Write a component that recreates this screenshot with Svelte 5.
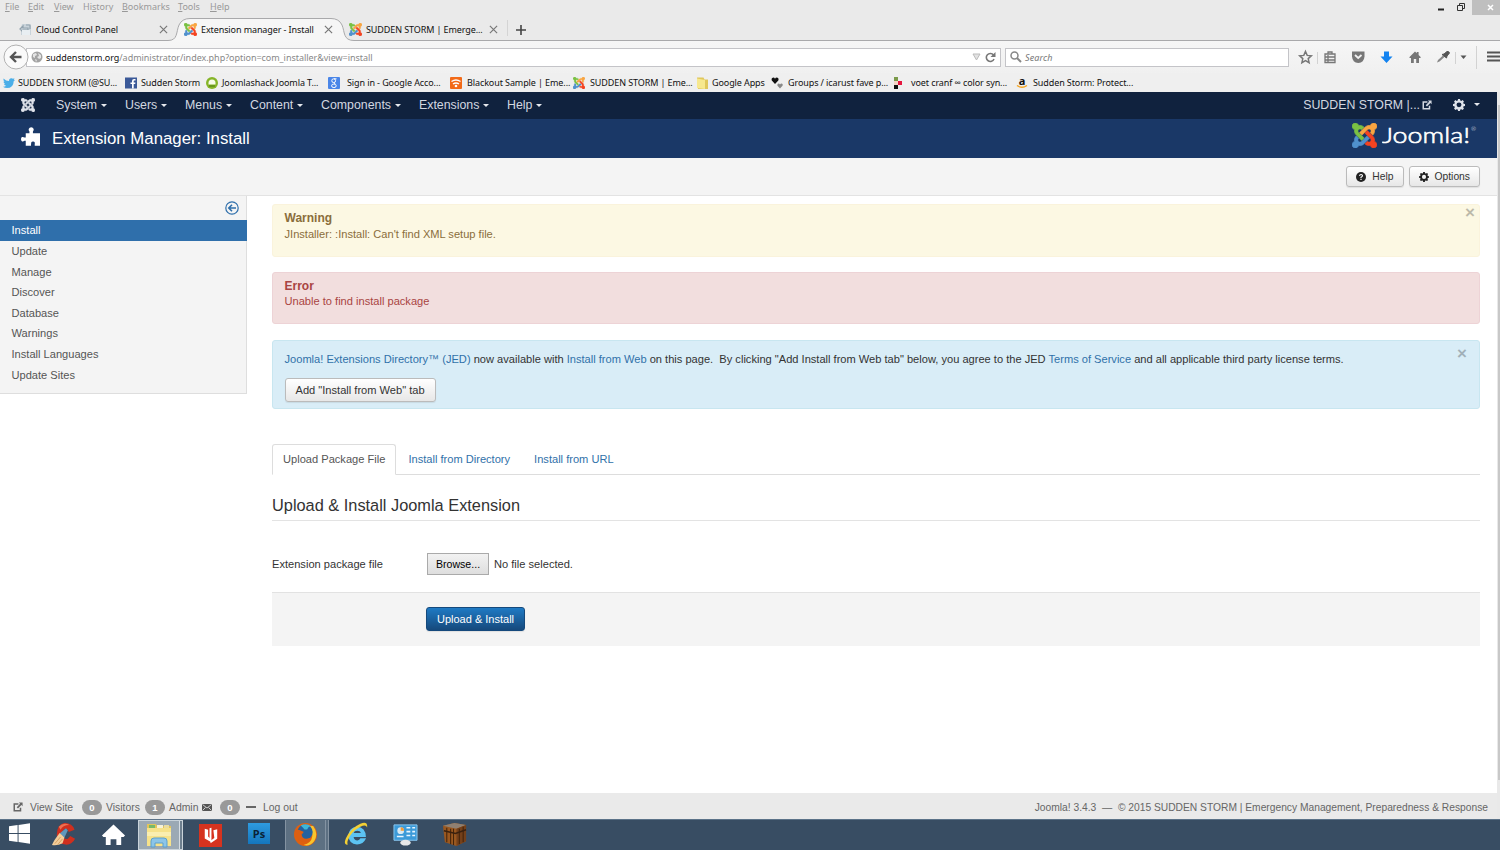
<script>
  let activeItem = "Install";
  let activePane = "Upload Package File";

  const browserMenu = ["File", "Edit", "View", "History", "Bookmarks", "Tools", "Help"];

  const bookmarks = [
    { icon: "twitter", label: "SUDDEN STORM (@SU..." },
    { icon: "facebook", label: "Sudden Storm" },
    { icon: "shack", label: "Joomlashack Joomla T..." },
    { icon: "google", label: "Sign in - Google Acco..." },
    { icon: "blackout", label: "Blackout Sample | Eme..." },
    { icon: "joomla", label: "SUDDEN STORM | Eme..." },
    { icon: "folder", label: "Google Apps" },
    { icon: "hearts", label: "Groups / icarust fave p..." },
    { icon: "squares", label: "voet cranf ∞ color syn..." },
    { icon: "amazon", label: "Sudden Storm: Protect..." },
  ];

  const adminMenu = ["System", "Users", "Menus", "Content", "Components", "Extensions", "Help"];

  const sidebar = [
    "Install",
    "Update",
    "Manage",
    "Discover",
    "Database",
    "Warnings",
    "Install Languages",
    "Update Sites",
  ];

  const panes = ["Upload Package File", "Install from Directory", "Install from URL"];

  // One arm of the Joomla mark, turned a quarter each time
  const arm =
    "M16.719 14.759L14.22 17.26l-2.37 2.37-.462.466c-1.368 1.365-3.297 1.83-5.047 1.397-.327 1.424-1.604 2.49-3.13 2.49C1.44 23.983 0 22.547 0 20.772c0-1.518 1.055-2.789 2.469-3.123-.446-1.76.016-3.705 1.396-5.08l.179-.18 2.37 2.37-.184.181c-.769.779-.769 2.024 0 2.789.771.78 2.022.78 2.787 0l.465-.465 2.367-2.371 2.502-2.506z";
  const armColors = ["#5091cd", "#7ac143", "#f9a541", "#f44321"];

  const gear =
    "M6.6 0h2.8l.4 2 1.5.7 1.8-1.2 1.9 2-1.1 1.7.6 1.5 2 .4v2.8l-2 .4-.6 1.5 1.1 1.8-1.9 1.9-1.8-1.1-1.5.6-.4 2H6.6l-.4-2-1.5-.6-1.8 1.1L1 13.600l1.100-1.800-.6-1.500-2-.4V7.100l2-.4.6-1.500L1 3.500l1.900-2 1.800 1.200L6.200 2zM8 4.800a3.500 3.500 0 1 0 0 7A3.500 3.500 0 0 0 8 4.800z";
</script>

{#snippet joomlaMark(mono)}
  <svg class="mark" viewBox="0 0 24 24">
    {#each armColors as color, i}
      <path
        d={arm}
        fill={mono ? "#dfe3ea" : color}
        stroke={mono ? "#dfe3ea" : color}
        stroke-width="0.6"
        transform="rotate({i * 90} 12 12)"
      />
    {/each}
  </svg>
{/snippet}

{#snippet cross()}
  <svg class="cross" viewBox="0 0 10 10"><path d="M1 1l8 8M9 1l-8 8" /></svg>
{/snippet}

{#snippet external()}
  <svg class="external" viewBox="0 0 12 12">
    <path d="M6.5 2.5H1.5v8h7.500V7" fill="none" stroke="currentColor" stroke-width="1.8" />
    <path d="M7 .5h4.500V5L10 3.600 6 7.700 4.500 6.200l4-4z" fill="currentColor" />
  </svg>
{/snippet}

<div class="screen">
  <div class="browser">
    <div class="titlebar">
      <nav class="browser-menu">
        {#each browserMenu as item}
          {@const key = item === "History" ? 2 : 0}
          <span>{item.slice(0, key)}<u>{item[key]}</u>{item.slice(key + 1)}</span>
        {/each}
      </nav>
      <div class="window-buttons">
        <svg viewBox="0 0 65 15" width="65" height="15">
          <rect x="37" y="0" width="28" height="15" fill="#bfbfbf" />
          <path d="M3 9.500h6" stroke="#222" stroke-width="2" />
          <path d="M22.500 5.500h5v5h-5zM24.500 5V3.500h5v5H28" fill="none" stroke="#333" />
          <path d="M53 5l5 5M58 5l-5 5" stroke="#fff" stroke-width="1.500" />
        </svg>
      </div>
    </div>

    <div class="tabs">
      <svg class="tab-shape" viewBox="0 0 1500 27" width="1500" height="27">
        <path
          d="M0 25.500H168C178 25.500 176 17 179 10Q182 3.500 190 3.500H331Q339 3.500 342 10C345 17 343 25.500 354 25.500H1500V27H0z"
          fill="#f6f6f6"
          stroke="#a9a9ab"
        />
        <path d="M0 26.500H1500" stroke="#f6f6f6" />
        <path d="M507.500 5v16" stroke="#d4d4d4" />
      </svg>
      <div class="tab first">
        <svg class="fav" viewBox="0 0 13 13">
          <path d="M3 1h7l2 2v9H2V5z" fill="#c9d3da" />
          <path d="M1 6l3-3v2h5v2H4v2zM7 2h4v4" fill="none" stroke="#93a3ae" stroke-width="1.200" />
          <path d="M3 7h8v5H3z" fill="#e8eef2" />
        </svg>
        <span class="tab-title">Cloud Control Panel</span>
        {@render cross()}
      </div>
      <div class="tab second">
        {@render joomlaMark(false)}
        <span class="tab-title">Extension manager - Install</span>
        {@render cross()}
      </div>
      <div class="tab third">
        {@render joomlaMark(false)}
        <span class="tab-title">SUDDEN STORM | Emerge...</span>
        {@render cross()}
      </div>
      <svg class="plus" viewBox="0 0 10 10"><path d="M5 0v10M0 5h10" stroke="#444" stroke-width="1.600" /></svg>
    </div>

    <div class="toolbar">
      <svg class="back" viewBox="0 0 26 26">
        <circle cx="13" cy="13" r="12" fill="#fafafa" stroke="#b1b1b1" />
        <path d="M18.500 13H8.500M13 8l-5 5 5 5" fill="none" stroke="#555" stroke-width="2.400" />
      </svg>
      <div class="url">
        <svg class="globe" viewBox="0 0 12 12">
          <circle cx="6" cy="6" r="5.500" fill="#a3a3a3" />
          <path d="M2 3l3-1 1 2-2 1v2L2 6zM7 2l3 2v3L8 8 6 6l2-1zM4 8l2 1-1 2z" fill="#e4e4e4" />
        </svg>
        <span class="address"
          ><b>suddenstorm.org</b>/administrator/index.php?option=com_installer&amp;view=install</span
        >
        <svg class="url-tools" viewBox="0 0 24 12">
          <path d="M1 3h7l-3.500 6z" fill="#e2e2e2" stroke="#bbb" />
          <path d="M21.500 4A4 4 0 1 0 22 8" fill="none" stroke="#777" stroke-width="1.600" />
          <path d="M23.500 1v5h-5z" fill="#777" />
        </svg>
      </div>
      <div class="search">
        <svg viewBox="0 0 12 12">
          <circle cx="4.500" cy="4.500" r="3.500" fill="none" stroke="#888" stroke-width="1.500" />
          <path d="M7 7l4 4" stroke="#888" stroke-width="2" />
        </svg>
        <span>Search</span>
      </div>
      <svg class="tool-icons" viewBox="0 0 211 30">
        <path
          d="M16.500 9.500l1.700 3.900 4.100.400-3.100 2.800.900 4.100-3.600-2.100-3.600 2.100.900-4.100-3.100-2.800 4.100-.400z"
          fill="none"
          stroke="#777"
          stroke-width="1.500"
        />
        <path d="M28.500 10v12M166.500 10v12M187.500 4v23" stroke="#d2d2d2" />
        <path
          d="M36 12h10v8.500H36zM39 12v-2h4v2M36 15h10M36 18h10M39 13v7"
          fill="none"
          stroke="#777"
          stroke-width="1.300"
        />
        <path d="M63 9.500h12.500v5q-.500 6-6.200 6.500-5.800-.500-6.300-6.500z" fill="#777" />
        <path d="M66 13l3.200 3 3.300-3" fill="none" stroke="#f2f2f2" stroke-width="1.800" />
        <path d="M95 9.500h5v5h3.500l-6 6.500-6-6.500H95z" fill="#1383f0" />
        <path d="M120.500 15l5.500-5.500 1.800 1.800V10h1.800v3l2 2v1h-1.600v5h-2.800v-4h-2.400v4H122v-5h-1.500z" fill="#777" />
        <path d="M148 20.500l1-2.500 5-4.500 1.500 1.500-5 4.500z" fill="#888" />
        <path d="M153 12.500l2-.500 3-2.500q2-.500 2.500 1.500l-2.500 3-.500 2z" fill="#555" stroke="#555" />
        <path d="M171.500 13.500h6l-3 3.500z" fill="#555" />
        <path d="M198 10.500h13M198 14.500h13M198 18.500h13" stroke="#555" stroke-width="2" />
      </svg>
    </div>

    <div class="bookmarks">
      {#each bookmarks as mark}
        <span class="bookmark-icon">
          {#if mark.icon === "joomla"}
            {@render joomlaMark(false)}
          {:else if mark.icon === "twitter"}
            <svg viewBox="0 0 12 12"><path d="M.500 1.500Q3 4 6 4 6 1 8.600 1.200l1.400.600 1.500-.500-.700 1.400L12 3l-1.300 1.200Q10.500 11 4 11 1.500 11 0 9.800q2 0 3.200-1Q1.500 8.500 1 7h1.200Q.500 6.200.500 4.400l1 .300Q0 3.500.500 1.500z" fill="#4aaee8" /></svg>
          {:else if mark.icon === "facebook"}
            <svg viewBox="0 0 12 12"><rect y=".500" width="12" height="11" fill="#3b5998" /><path d="M7 11.500V7H5.500V5.500H7V4q0-2 2-2h1.500v1.600H9.300q-.600 0-.600.700v1.200h1.700L10.200 7H8.700v4.500z" fill="#fff" /></svg>
          {:else if mark.icon === "shack"}
            <svg viewBox="0 0 12 12"><circle cx="6" cy="6" r="6" fill="#86b528" /><path d="M2.500 6a3.500 3.500 0 0 1 7 0v1.500h-7z" fill="#f6fbe8" /><path d="M3 9h6" stroke="#4c7a11" /></svg>
          {:else if mark.icon === "google"}
            <svg viewBox="0 0 12 12"><rect width="12" height="12" rx="1" fill="#4a86e8" /><circle cx="5.700" cy="3.700" r="1.900" fill="none" stroke="#fff" /><ellipse cx="5.900" cy="8.800" rx="2.300" ry="1.800" fill="none" stroke="#fff" /><path d="M6 1.800h2.500M6 5.500l1 1.500" stroke="#fff" /></svg>
          {:else if mark.icon === "blackout"}
            <svg viewBox="0 0 12 12"><rect width="12" height="12" rx="1" fill="#f26a18" /><path d="M1.500 4.500Q6 1.500 10.500 4.500M3 7q3-2 6 0" fill="none" stroke="#fff" stroke-width="1.500" /><circle cx="6" cy="9" r="1.300" fill="#fff" /></svg>
          {:else if mark.icon === "folder"}
            <svg viewBox="0 0 12 12"><path d="M0 .500h6.500l1 2H11V12H1z" fill="#e0c75c" /><path d="M0 1.500L8 3v9L0 11z" fill="#f7e88e" /></svg>
          {:else if mark.icon === "hearts"}
            <svg viewBox="0 0 12 12"><path d="M4 7L.800 3.500Q0 1 2.200.500 3.500.500 4 1.700 4.500.500 6 .500 8.200 1 7.300 3.500z" fill="#111" /><path d="M9 11.500L6.500 8.800Q6 7 7.500 6.500q1 0 1.500 1 .500-1 1.700-1Q12.300 7 11.500 8.800z" fill="#888" /></svg>
          {:else if mark.icon === "squares"}
            <svg viewBox="0 0 12 12"><path d="M1 0h4v4H1z" fill="#7b9a4a" /><path d="M5 4h4v4H5z" fill="#e5173f" /><path d="M1 4h4v4H1z" fill="#f5d6c8" /><path d="M1 8h4v4H1z" fill="#111" /></svg>
          {:else}
            <span class="amazon">a<svg viewBox="0 0 12 4"><path d="M1 .500q5 3.500 10 0" fill="none" stroke="#f5a623" stroke-width="1.400" /></svg></span>
          {/if}
        </span>
        <span class="bookmark-label">{mark.label}</span>
      {/each}
    </div>
  </div>

  <div class="page">
    <div class="content">
      <header class="navbar">
        <div class="brand">{@render joomlaMark(true)}</div>
        <nav class="admin-menu">
          {#each adminMenu as item}
            <span class="menu-item">{item}<i class="caret"></i></span>
          {/each}
        </nav>
        <div class="site-name">SUDDEN STORM |... {@render external()}</div>
        <div class="settings">
          <svg viewBox="-0.5 0 17 17"><path d={gear} fill="#dfe3ea" fill-rule="evenodd" /></svg>
          <i class="caret"></i>
        </div>
      </header>

      <div class="header">
        <svg class="puzzle" viewBox="0 0 18 18">
          <path d="M4.500 6H8V4.300Q7 3.300 7.300 2 8 .300 9.700.300T12 2q.300 1.300-.700 2.300V6H18v11.800h-5V16q.600-2-1.500-2.200T9.500 16v1.800h-5V13H3.300Q2.300 14 1 13.700 0 13 0 11.500T1 9.500q1.300-.300 2.300.500h1.200z" fill="#fff" />
        </svg>
        <h1>Extension Manager: Install</h1>
        <div class="logo">
          {@render joomlaMark(false)}
          <svg class="wordmark" viewBox="0 0 96 28">
            <text x="0" y="21.500" textLength="88" lengthAdjust="spacingAndGlyphs">Joomla!</text>
            <text class="reg" x="89" y="10">®</text>
          </svg>
        </div>
      </div>

      <div class="subhead">
        <button class="btn small">
          <svg viewBox="0 0 12 12"><circle cx="6" cy="6" r="6" fill="#222" /><path d="M4.200 4.700Q4.500 3 6.100 3T7.800 4.600Q7.800 5.500 6 6.400v.800M6 8.200v1.500" fill="none" stroke="#fff" stroke-width="1.400" /></svg>
          Help
        </button>
        <button class="btn small">
          <svg viewBox="-0.5 0 17 17"><path d={gear} fill="#222" fill-rule="evenodd" /></svg>
          Options
        </button>
      </div>

      <div class="columns">
        <aside>
          <div class="toggle">
            <svg viewBox="0 0 14 14">
              <circle cx="7" cy="7" r="6.200" fill="none" stroke="#2f6fab" stroke-width="1.200" />
              <path d="M11 7H4M7 3.800L3.800 7 7 10.200" fill="none" stroke="#2f6fab" stroke-width="1.600" />
            </svg>
          </div>
          {#each sidebar as item}
            <div class="side-item" class:active={item === activeItem}>{item}</div>
          {/each}
        </aside>

        <main>
          <div class="alert warning">
            <div><h4>Warning</h4><p>JInstaller: :Install: Can't find XML setup file.</p></div>
            <span class="close">×</span>
          </div>
          <div class="alert error">
            <div><h4>Error</h4><p>Unable to find install package</p></div>
          </div>
          <div class="alert info">
            <div>
              <p class="jed">
                <a href="#jed">Joomla! Extensions Directory™ (JED)</a> now available with
                <a href="#web">Install from Web</a> on this page.&nbsp; By clicking "Add Install from Web tab" below,
                you agree to the JED <a href="#terms">Terms of Service</a> and all applicable third party license terms.
              </p>
              <button class="btn">Add "Install from Web" tab</button>
            </div>
            <span class="close">×</span>
          </div>

          <div class="panes">
            {#each panes as pane}
              <span class="pane" class:active={pane === activePane}>{pane}</span>
            {/each}
          </div>

          <h2>Upload &amp; Install Joomla Extension</h2>
          <div class="field">
            <span class="field-label">Extension package file</span>
            <button class="browse">Browse...</button>
            <span>No file selected.</span>
          </div>
          <div class="actions">
            <button class="btn primary">Upload &amp; Install</button>
          </div>
        </main>
      </div>

      <footer>
        <div class="status">
          {@render external()}
          <span class="view-site">View Site</span>
          <span class="badge">0</span>
          <span class="visitors">Visitors</span>
          <span class="badge">1</span>
          <span class="admin">Admin</span>
          <svg class="mail" viewBox="0 0 10 7"><path d="M0 0h10v7H0z" fill="#555" /><path d="M.500.500L5 4 9.500.500M.500 6.500L3.500 3.500M9.500 6.500l-3-3" fill="none" stroke="#e8e8e8" stroke-width=".800" /></svg>
          <span class="badge">0</span>
          <i class="dash"></i>
          <span>Log out</span>
        </div>
        <div class="copyright">
          Joomla! 3.4.3 &nbsp;—&nbsp; © 2015 SUDDEN STORM | Emergency Management, Preparedness &amp; Response
        </div>
      </footer>
    </div>
    <div class="scrollbar"><i></i></div>
  </div>

  <div class="taskbar">
    <span class="task">
      <svg class="start" viewBox="0 0 22 22"><path d="M0 3.500l9-1.300v8.300H0zM10 2l12-1.700v10.200H10zM0 11.500h9v8.300l-9-1.300zM10 11.500h12v10.200L10 20z" fill="#fff" /></svg>
    </span>
    <span class="task">
      <svg class="big" viewBox="0 0 26 26">
        <path d="M24.500 8l-6 2.500q-1-4-4-3.500-4 2-3 7 2 4.500 6 3.500l2.500-3 5 3q-3 6.500-10 6-9-1-9-10Q6 3 13.500 1 22 .500 24.500 8z" fill="#cf2f1e" />
        <path d="M8 5q5-5 11-2-7 0-9 5z" fill="#ee7050" />
        <path d="M15.500 6.500l2 2L14 16l-5-4z" fill="#5f97bd" />
        <path d="M9 11.500l5 4.500-2 6q-5 3-11 2 2-5 8-12.500z" fill="#f3cd9a" />
        <path d="M4 22.500l6-7M7 23.500l5-6" stroke="#c98d48" stroke-width=".700" />
      </svg>
    </span>
    <span class="task">
      <svg class="big" viewBox="0 0 26 26"><path d="M13 2.500L25 14l-1.500 1.500H21V24h-5v-6h-6v6H5v-8.500H2.500L1 14z" fill="#fff" /></svg>
    </span>
    <span class="task open current">
      <svg class="wide" viewBox="0 0 28 26">
        <path d="M2 2h9l1 2h14v18H2z" fill="#e3c45a" />
        <path d="M4 3h6v3H4z" fill="#78b96a" /><path d="M12 3h6v4h-6z" fill="#f6f2d8" /><path d="M19 3h5v4h-5z" fill="#e9dca0" />
        <path d="M2 6h24v18H2z" fill="#f6e28a" />
        <path d="M2 10h24v4H2z" fill="#faeeb0" />
        <path d="M6 25v-6q0-3 3-3h10q3 0 3 3v6h-4v-4h-8v4z" fill="#8cc5e8" stroke="#5b9fce" />
      </svg>
    </span>
    <span class="task">
      <svg viewBox="0 0 24 24"><path d="M0 0h24v24H0z" fill="#d6331f" /><path d="M6 5l3.500 1v7l1.500 1.500V4.500L13 4v15l-7-4z" fill="#fff" /><path d="M15 6.500l4-1v10L12 20v-2.500l4-3z" fill="#fff" /></svg>
    </span>
    <span class="task">
      <span class="ps">Ps</span>
    </span>
    <span class="task open">
      <svg class="firefox" viewBox="0 0 24 24">
        <circle cx="12" cy="12" r="12" fill="#e0600f" />
        <path d="M20 3q6 8 1 16-5 6-11 4 8-2 9-9 .500-7-3-11z" fill="#f9c52d" />
        <circle cx="11.500" cy="9.500" r="8" fill="#24629f" />
        <path d="M7 2.500q6-3 11 1-3 0-4 3-4 1-4-1z" fill="#3fb6d8" />
        <path d="M1 6q2 2 4 1l5 2q0 2-2 2.500 0 5 5 5l5-1q-3 6-10 4-8-3-7-13.500z" fill="#dc5f12" />
      </svg>
    </span>
    <span class="task">
      <svg class="big" viewBox="0 0 26 26">
        <path d="M23 17q-3 6.500-9.500 6.500-8.500-1-9-9Q5 5.500 13.500 5 22.500 5.500 22.800 15.500H10q.500 3.500 4 3.700 2.200 0 3-2.200zM10 11.500h7.500Q17 9 13.800 9 10.600 9 10 11.500z" fill="#5cc3f2" />
        <path d="M4 23.500q-5 1-2-6.500Q7 6 17 1.700q8-3 7 4-1-3.500-7-.700Q7 10.500 4 19q-1 3 0 4.500z" fill="#f4d034" />
      </svg>
    </span>
    <span class="task">
      <svg class="big" viewBox="0 0 26 24">
        <path d="M1 2h24v16H1z" fill="#3c9ad8" stroke="#8ac7ee" />
        <circle cx="8" cy="8" r="3.500" fill="#d6e9f5" /><path d="M8 8V4.500A3.500 3.500 0 0 1 11.500 8z" fill="#f09a36" />
        <path d="M14 5h4M20 5h3M14 9h4M20 9h3M14 13h4M20 13h3M4 14h7" stroke="#e7f5ff" stroke-width="1.600" />
        <ellipse cx="13" cy="20.500" rx="5.500" ry="3" fill="#e8e8e8" />
      </svg>
    </span>
    <span class="task">
      <svg class="big" viewBox="0 0 26 26">
        <path d="M1 4l12-3 12 2v17l-10 5L3 21z" fill="#9a5820" />
        <path d="M1 4l12-3 12 2-10 4z" fill="#8f8072" />
        <path d="M15 7l10-4v17l-10 5z" fill="#74401a" />
        <path d="M5 6v15M9 7v16M12 7v17M18 7v16M22 5v16" stroke="#3d2008" />
        <path d="M2 9l12 3 11-4" fill="none" stroke="#3a210f" stroke-width="1.600" />
      </svg>
    </span>
  </div>
</div>

<style>
  :global(body) {
    margin: 0;
    overflow: hidden;
  }

  .screen {
    width: 1500px;
    height: 850px;
    display: flex;
    flex-direction: column;
    overflow: hidden;
    background: #fff;
    font-family: "Liberation Sans", Arial, sans-serif;
    font-size: 11.1px;
    color: #333;
    white-space: nowrap;
  }

  svg {
    display: block;
    flex: none;
  }

  button {
    font: inherit;
    margin: 0;
  }

  /* browser chrome */
  .browser {
    height: 92px;
    background: #eaeaea;
    color: #111;
    font-family: "Noto Sans", "Open Sans", sans-serif;
    font-size: 9px;
    letter-spacing: -0.1px;
  }

  .titlebar {
    height: 15px;
    display: flex;
    justify-content: space-between;
  }

  .browser-menu {
    display: grid;
    grid-template-columns: 23px 26px 29px 39px 56px 32px 30px;
    padding-left: 5px;
    line-height: 14px;
    color: #999;
    letter-spacing: 0;
  }

  .tabs {
    position: relative;
    height: 26px;
    display: flex;
    align-items: center;
  }

  .tab-shape {
    position: absolute;
    left: 0;
    top: 0;
  }

  .tab {
    position: relative;
    display: flex;
    align-items: center;
    height: 26px;
    padding-top: 3px;
    box-sizing: border-box;
  }

  .first {
    margin-left: 19px;
    width: 149px;
  }

  .second {
    margin-left: 16px;
    width: 149px;
  }

  .third {
    margin-left: 16px;
    width: 149px;
  }

  .tab-title {
    flex: 1;
    margin-left: 4px;
  }

  .fav,
  .tab .mark {
    width: 13px;
    height: 13px;
  }

  .cross {
    width: 9px;
    height: 9px;
    fill: none;
    stroke: #777;
    stroke-width: 1.3;
  }

  .plus {
    position: relative;
    width: 10px;
    height: 10px;
    margin: 3px 0 0 18px;
  }

  .toolbar {
    height: 32px;
    display: flex;
    align-items: center;
    background: linear-gradient(#f6f6f6, #f0f0f0);
  }

  .back {
    width: 26px;
    height: 26px;
    margin-left: 3px;
    z-index: 1;
  }

  .url {
    width: 975px;
    height: 19px;
    margin-left: -3px;
    box-sizing: border-box;
    border: 1px solid #c4c4c8;
    background: #fff;
    display: flex;
    align-items: center;
    padding-left: 4px;
  }

  .globe {
    width: 12px;
    height: 12px;
  }

  .address {
    flex: 1;
    margin-left: 3px;
    color: #888;
    letter-spacing: -0.03px;
  }

  .address b {
    font-weight: 400;
    color: #111;
  }

  .url-tools {
    width: 24px;
    height: 12px;
    margin-right: 4px;
  }

  .search {
    width: 284px;
    height: 19px;
    margin-left: 4px;
    box-sizing: border-box;
    border: 1px solid #c4c4c8;
    background: #fff;
    display: flex;
    align-items: center;
    padding-left: 4px;
    gap: 3px;
    font-style: italic;
    color: #777;
  }

  .search svg {
    width: 12px;
    height: 12px;
  }

  .search span {
    letter-spacing: 0.1px;
  }

  .tool-icons {
    width: 211px;
    height: 30px;
  }

  .bookmarks {
    height: 19px;
    display: grid;
    grid-template-columns:
      15px 107px 16px 65px 16px 106px 19px 103px 17px 106px
      17px 107px 15px 59px 17px 105px 18px 105px 17px 104px;
    align-items: center;
    padding-left: 3px;
    background: #efefef;
    line-height: 18px;
  }

  .bookmark-icon svg,
  .bookmark-icon .mark {
    width: 12px;
    height: 12px;
  }

  .amazon {
    display: block;
    width: 12px;
    font-size: 11px;
    font-weight: bold;
    line-height: 9px;
    text-align: center;
  }

  .bookmark-icon .amazon svg {
    height: 4px;
  }

  /* administrator page */
  .page {
    height: 727px;
    display: flex;
  }

  .content {
    width: 1497px;
    display: flex;
    flex-direction: column;
  }

  .scrollbar {
    width: 3px;
    background: #e9e9e9;
  }

  .scrollbar i {
    display: block;
    height: 675px;
    margin: 13px 0 0 1px;
    background: #c8c8c8;
  }

  .navbar {
    height: 27px;
    display: flex;
    align-items: center;
    padding-bottom: 2px;
    box-sizing: border-box;
    background: #10223e;
    color: #d3d8e0;
    font-size: 12.35px;
  }

  .brand {
    width: 56px;
  }

  .brand .mark {
    width: 14px;
    height: 14px;
    margin-left: 21px;
  }

  .admin-menu {
    display: grid;
    grid-template-columns: 69px 60px 65px 71px 98px 88px 60px;
    flex: 1;
  }

  .caret {
    display: inline-block;
    vertical-align: middle;
    margin-left: 4px;
    border: 3.5px solid transparent;
    border-top-color: #e6e9ee;
    border-bottom: 0;
  }

  .site-name {
    display: flex;
    align-items: center;
    gap: 2px;
  }

  .external {
    width: 10px;
    height: 10px;
  }

  .settings {
    display: flex;
    align-items: center;
    margin: 0 17px 0 21px;
    gap: 5px;
  }

  .settings svg {
    width: 12px;
    height: 12px;
  }

  .header {
    height: 39px;
    display: flex;
    align-items: center;
    background: #1a3867;
    color: #fff;
  }

  .puzzle {
    width: 19px;
    height: 19px;
    margin: 0 0 4px 21px;
  }

  h1 {
    flex: 1;
    margin: 0 0 0 12px;
    font-size: 16.8px;
    font-weight: 400;
  }

  .logo {
    display: flex;
    align-items: center;
    margin-right: 19px;
    margin-bottom: 7px;
  }

  .logo .mark {
    width: 25px;
    height: 25px;
  }

  .wordmark {
    width: 96px;
    height: 28px;
    margin-left: 5px;
  }

  .wordmark text {
    font: 300 21px Lato, sans-serif;
    fill: #fff;
    stroke: #fff;
    stroke-width: 0.6px;
  }

  .wordmark .reg {
    font-size: 6px;
    stroke: none;
  }

  .subhead {
    height: 38px;
    box-sizing: border-box;
    display: flex;
    align-items: center;
    justify-content: flex-end;
    gap: 5px;
    padding-right: 17px;
    background: #f4f4f4;
    border-bottom: 1px solid #e3e3e3;
  }

  .btn {
    height: 24px;
    padding: 0 10px;
    display: flex;
    align-items: center;
    box-sizing: border-box;
    border: 1px solid #bbb;
    border-radius: 3px;
    background: linear-gradient(#fff, #e7e7e7);
    box-shadow: 0 1px 1px rgba(0, 0, 0, 0.08);
    color: #333;
  }

  .small {
    height: 21px;
    padding: 0 9px;
    font-size: 10.3px;
  }

  .small svg {
    width: 10px;
    height: 10px;
    margin-right: 6px;
  }

  .columns {
    flex: 1;
    display: flex;
    align-items: flex-start;
  }

  aside {
    width: 247px;
    height: 198px;
    box-sizing: border-box;
    background: #f4f4f4;
    border-right: 1px solid #dedede;
    border-bottom: 1px solid #dedede;
    color: #555;
  }

  .toggle {
    height: 24.4px;
    display: flex;
    align-items: center;
    justify-content: flex-end;
    padding-right: 7px;
  }

  .toggle svg {
    width: 14px;
    height: 14px;
  }

  .side-item {
    height: 20.6px;
    line-height: 21px;
    padding-left: 11.5px;
  }

  .side-item.active {
    background: #2f6fab;
    color: #fff;
    margin-right: -1px;
  }

  main {
    width: 1208px;
    margin-left: 25px;
    padding-top: 8px;
  }

  .alert {
    height: 52px;
    margin-bottom: 16px;
    box-sizing: border-box;
    display: flex;
    justify-content: space-between;
    padding: 5px 4px 0 11.5px;
    border: 1px solid;
    border-radius: 3px;
    line-height: 15px;
  }

  .alert h4 {
    margin: 0;
    font-size: 12px;
    line-height: 16px;
  }

  .alert p {
    margin: 0;
  }

  .warning {
    height: 53px;
    margin-bottom: 15px;
    background: #fcf8e3;
    border-color: #faf3dc;
    color: #8a6d3b;
  }

  .warning h4 {
    line-height: 17px;
  }

  .error {
    background: #f2dede;
    border-color: #edd3d6;
    color: #a94442;
  }

  .info {
    height: 69px;
    margin-bottom: 35px;
    padding: 11px 12px 0 11.5px;
    background: #d9edf7;
    border-color: #c8e6f0;
    color: #333;
  }

  .close {
    height: 15px;
    color: #000;
    opacity: 0.25;
    font-size: 17px;
    font-weight: bold;
    line-height: 5px;
  }

  .info .close {
    line-height: 4px;
  }

  a {
    color: #3071a9;
    text-decoration: none;
  }

  .jed {
    height: 26px;
    letter-spacing: -0.003px;
  }

  .panes {
    height: 31px;
    display: flex;
    box-sizing: border-box;
    border-bottom: 1px solid #ddd;
    line-height: 30px;
  }

  .pane {
    height: 30px;
    box-sizing: border-box;
    padding: 0 12px;
    color: #3071a9;
  }

  .pane.active {
    height: 31px;
    padding: 0 10px;
    line-height: 29px;
    border: 1px solid #ddd;
    border-bottom-color: #fff;
    border-radius: 3px 3px 0 0;
    background: #fff;
    color: #555;
  }

  h2 {
    height: 46px;
    box-sizing: border-box;
    margin: 0;
    padding-top: 15px;
    border-bottom: 1px solid #e3e3e3;
    font-size: 16.35px;
    font-weight: 400;
    line-height: 31px;
  }

  .field {
    height: 71px;
    display: flex;
    align-items: center;
    padding-top: 15px;
    box-sizing: border-box;
  }

  .field-label {
    width: 155px;
  }

  .browse {
    width: 62px;
    height: 22px;
    margin-right: 5px;
    padding: 0;
    border: 1px solid #aaa;
    background: linear-gradient(#f2f2f2, #dedede);
    color: #000;
    font-size: 10.6px;
  }

  .actions {
    height: 54px;
    display: flex;
    align-items: center;
    padding: 0 0 2px 154px;
    box-sizing: border-box;
    background: #f4f4f4;
    border-top: 1px solid #e2e2e2;
  }

  .primary {
    padding: 0 10px;
    border-color: #15497c;
    background: linear-gradient(#1f7ac4, #16497c);
    color: #fff;
    font-size: 11px;
  }

  footer {
    height: 26px;
    display: flex;
    align-items: center;
    justify-content: space-between;
    padding: 2px 9px 0 13px;
    box-sizing: border-box;
    background: #eaeaea;
    color: #666;
    font-size: 10.4px;
  }

  .copyright {
    font-size: 10.25px;
  }

  .status {
    display: flex;
    align-items: center;
  }

  .view-site {
    width: 52px;
    margin-left: 7px;
  }

  .badge {
    width: 20px;
    height: 15px;
    border-radius: 8px;
    background: #999;
    color: #fff;
    font-size: 9.5px;
    font-weight: bold;
    line-height: 15px;
    text-align: center;
  }

  .visitors {
    width: 39px;
    margin-left: 4px;
  }

  .admin {
    width: 33px;
    margin-left: 4px;
  }

  .mail {
    width: 10px;
    height: 7px;
    margin-right: 8px;
  }

  .dash {
    width: 10px;
    height: 2px;
    margin: 0 7px 0 6px;
    background: #666;
  }

  /* windows taskbar */
  .taskbar {
    height: 31px;
    box-sizing: border-box;
    display: grid;
    grid-template-columns: 39px 49px 50px 45px 54px 48px 44px 54px 44px 54px;
    background: #384d63;
    border-top: 1px solid #5b7288;
  }

  .task {
    display: flex;
    align-items: center;
    justify-content: center;
  }

  .task svg {
    width: 23px;
    height: 23px;
  }

  .task .start {
    width: 21px;
    height: 21px;
    margin-bottom: 3px;
  }

  .task .big {
    width: 25px;
    height: 25px;
    margin-bottom: 2px;
  }

  .task .wide {
    width: 28px;
    height: 26px;
    margin-right: 3px;
  }

  .task .firefox {
    margin: 0 4px 2px 0;
  }

  .open {
    background: #5d7082;
    border: 1px solid #8493a2;
    border-width: 0 1px;
    box-shadow: inset -2px 0 #5d7082, inset -3px 0 #8493a2;
  }

  .current {
    background: #9ba9b4;
    border: 1px solid #c9d3da;
    box-shadow: inset -2px 0 #6d7f8f, inset -3px 0 #d5dde3;
  }

  .ps {
    width: 22px;
    height: 21px;
    margin: 0 4px 3px 0;
    background: linear-gradient(#2e9be0, #1476bd);
    color: #0a2236;
    font: bold 11px/21px "Open Sans", sans-serif;
    text-align: center;
  }
</style>
